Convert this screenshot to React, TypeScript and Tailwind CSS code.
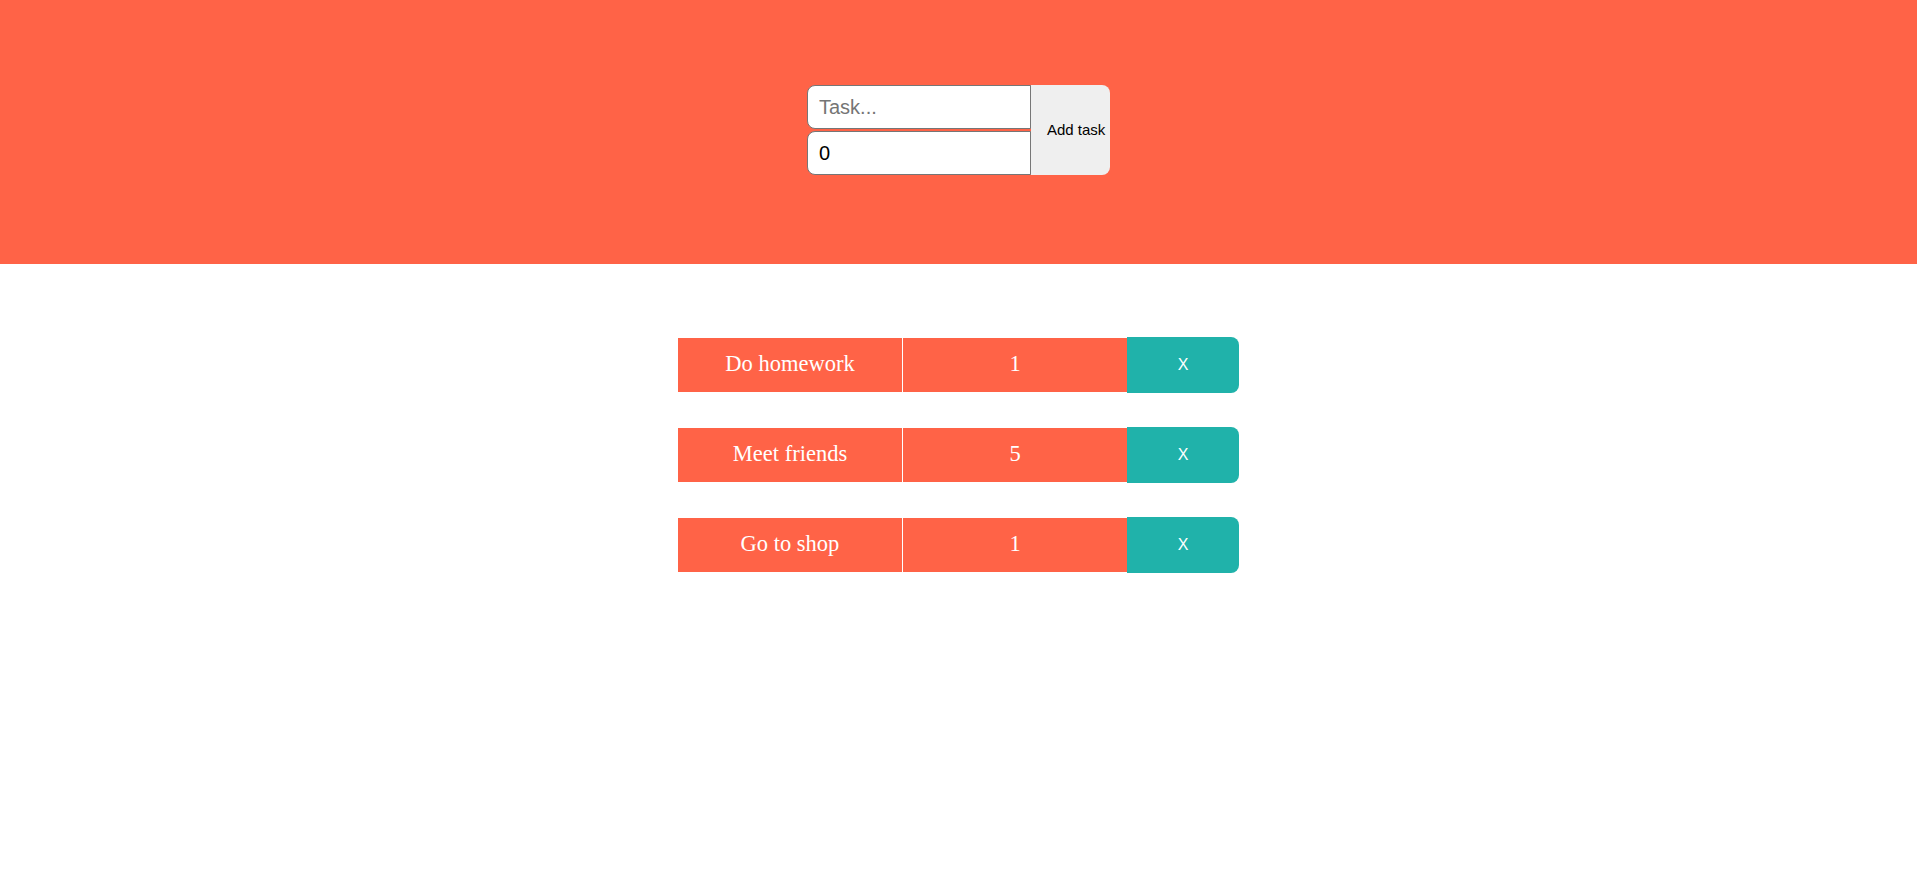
import { useState } from "react";

type Task = { name: string; priority: number };

const initialTasks: Task[] = [
  { name: "Do homework", priority: 1 },
  { name: "Meet friends", priority: 5 },
  { name: "Go to shop", priority: 1 },
];

export default function App() {
  const [tasks, setTasks] = useState<Task[]>(initialTasks);
  const [name, setName] = useState("");
  const [priority, setPriority] = useState("0");

  const addTask = () => {
    if (!name.trim()) return;
    setTasks([...tasks, { name, priority: Number(priority) || 0 }]);
    setName("");
    setPriority("0");
  };

  return (
    <div className="min-h-[872px] bg-white">
      {/* Header with form */}
      <header className="h-[264px] bg-[#ff6347] pt-[85px] flex justify-center">
        <div className="flex h-[90px]">
          <div className="flex flex-col gap-[2px] w-[224px]">
            <input
              className="h-[44px] w-full bg-white border border-[#767676] rounded-l-lg pl-[11px] text-[20px] text-black placeholder:text-[#757575] outline-none font-['Liberation_Sans',Arial,sans-serif]"
              placeholder="Task..."
              value={name}
              onChange={(e) => setName(e.target.value)}
            />
            <input
              className="h-[44px] w-full bg-white border border-[#767676] rounded-l-lg pl-[11px] text-[20px] text-black outline-none font-['Liberation_Sans',Arial,sans-serif]"
              type="text"
              value={priority}
              onChange={(e) => setPriority(e.target.value)}
            />
          </div>
          <button
            type="button"
            onClick={addTask}
            className="w-[79px] h-[90px] bg-[#efefef] rounded-r-lg pl-[16px] text-left whitespace-nowrap text-[15px] text-black font-['Liberation_Sans',Arial,sans-serif]"
          >
            Add task
          </button>
        </div>
      </header>

      {/* Task list */}
      <div className="flex flex-col items-center pt-[73px] gap-[34px]">
        {tasks.map((t, i) => (
          <div key={i} className="flex items-center w-[561px] h-[56px]">
            <div className="w-[224px] h-[54px] pb-[2px] bg-[#ff6347] text-white text-[22.5px] flex items-center justify-center font-['Liberation_Serif','Times_New_Roman',serif]">
              {t.name}
            </div>
            <div className="w-[1px] h-[54px] bg-white" />
            <div className="w-[224px] h-[54px] pb-[2px] bg-[#ff6347] text-white text-[22.5px] flex items-center justify-center font-['Liberation_Serif','Times_New_Roman',serif]">
              {t.priority}
            </div>
            <button
              type="button"
              onClick={() => setTasks(tasks.filter((_, j) => j !== i))}
              className="w-[112px] h-[56px] bg-[#20b2aa] rounded-r-lg text-white text-[16px] flex items-center justify-center font-['Liberation_Sans',Arial,sans-serif]"
            >
              X
            </button>
          </div>
        ))}
      </div>
    </div>
  );
}
